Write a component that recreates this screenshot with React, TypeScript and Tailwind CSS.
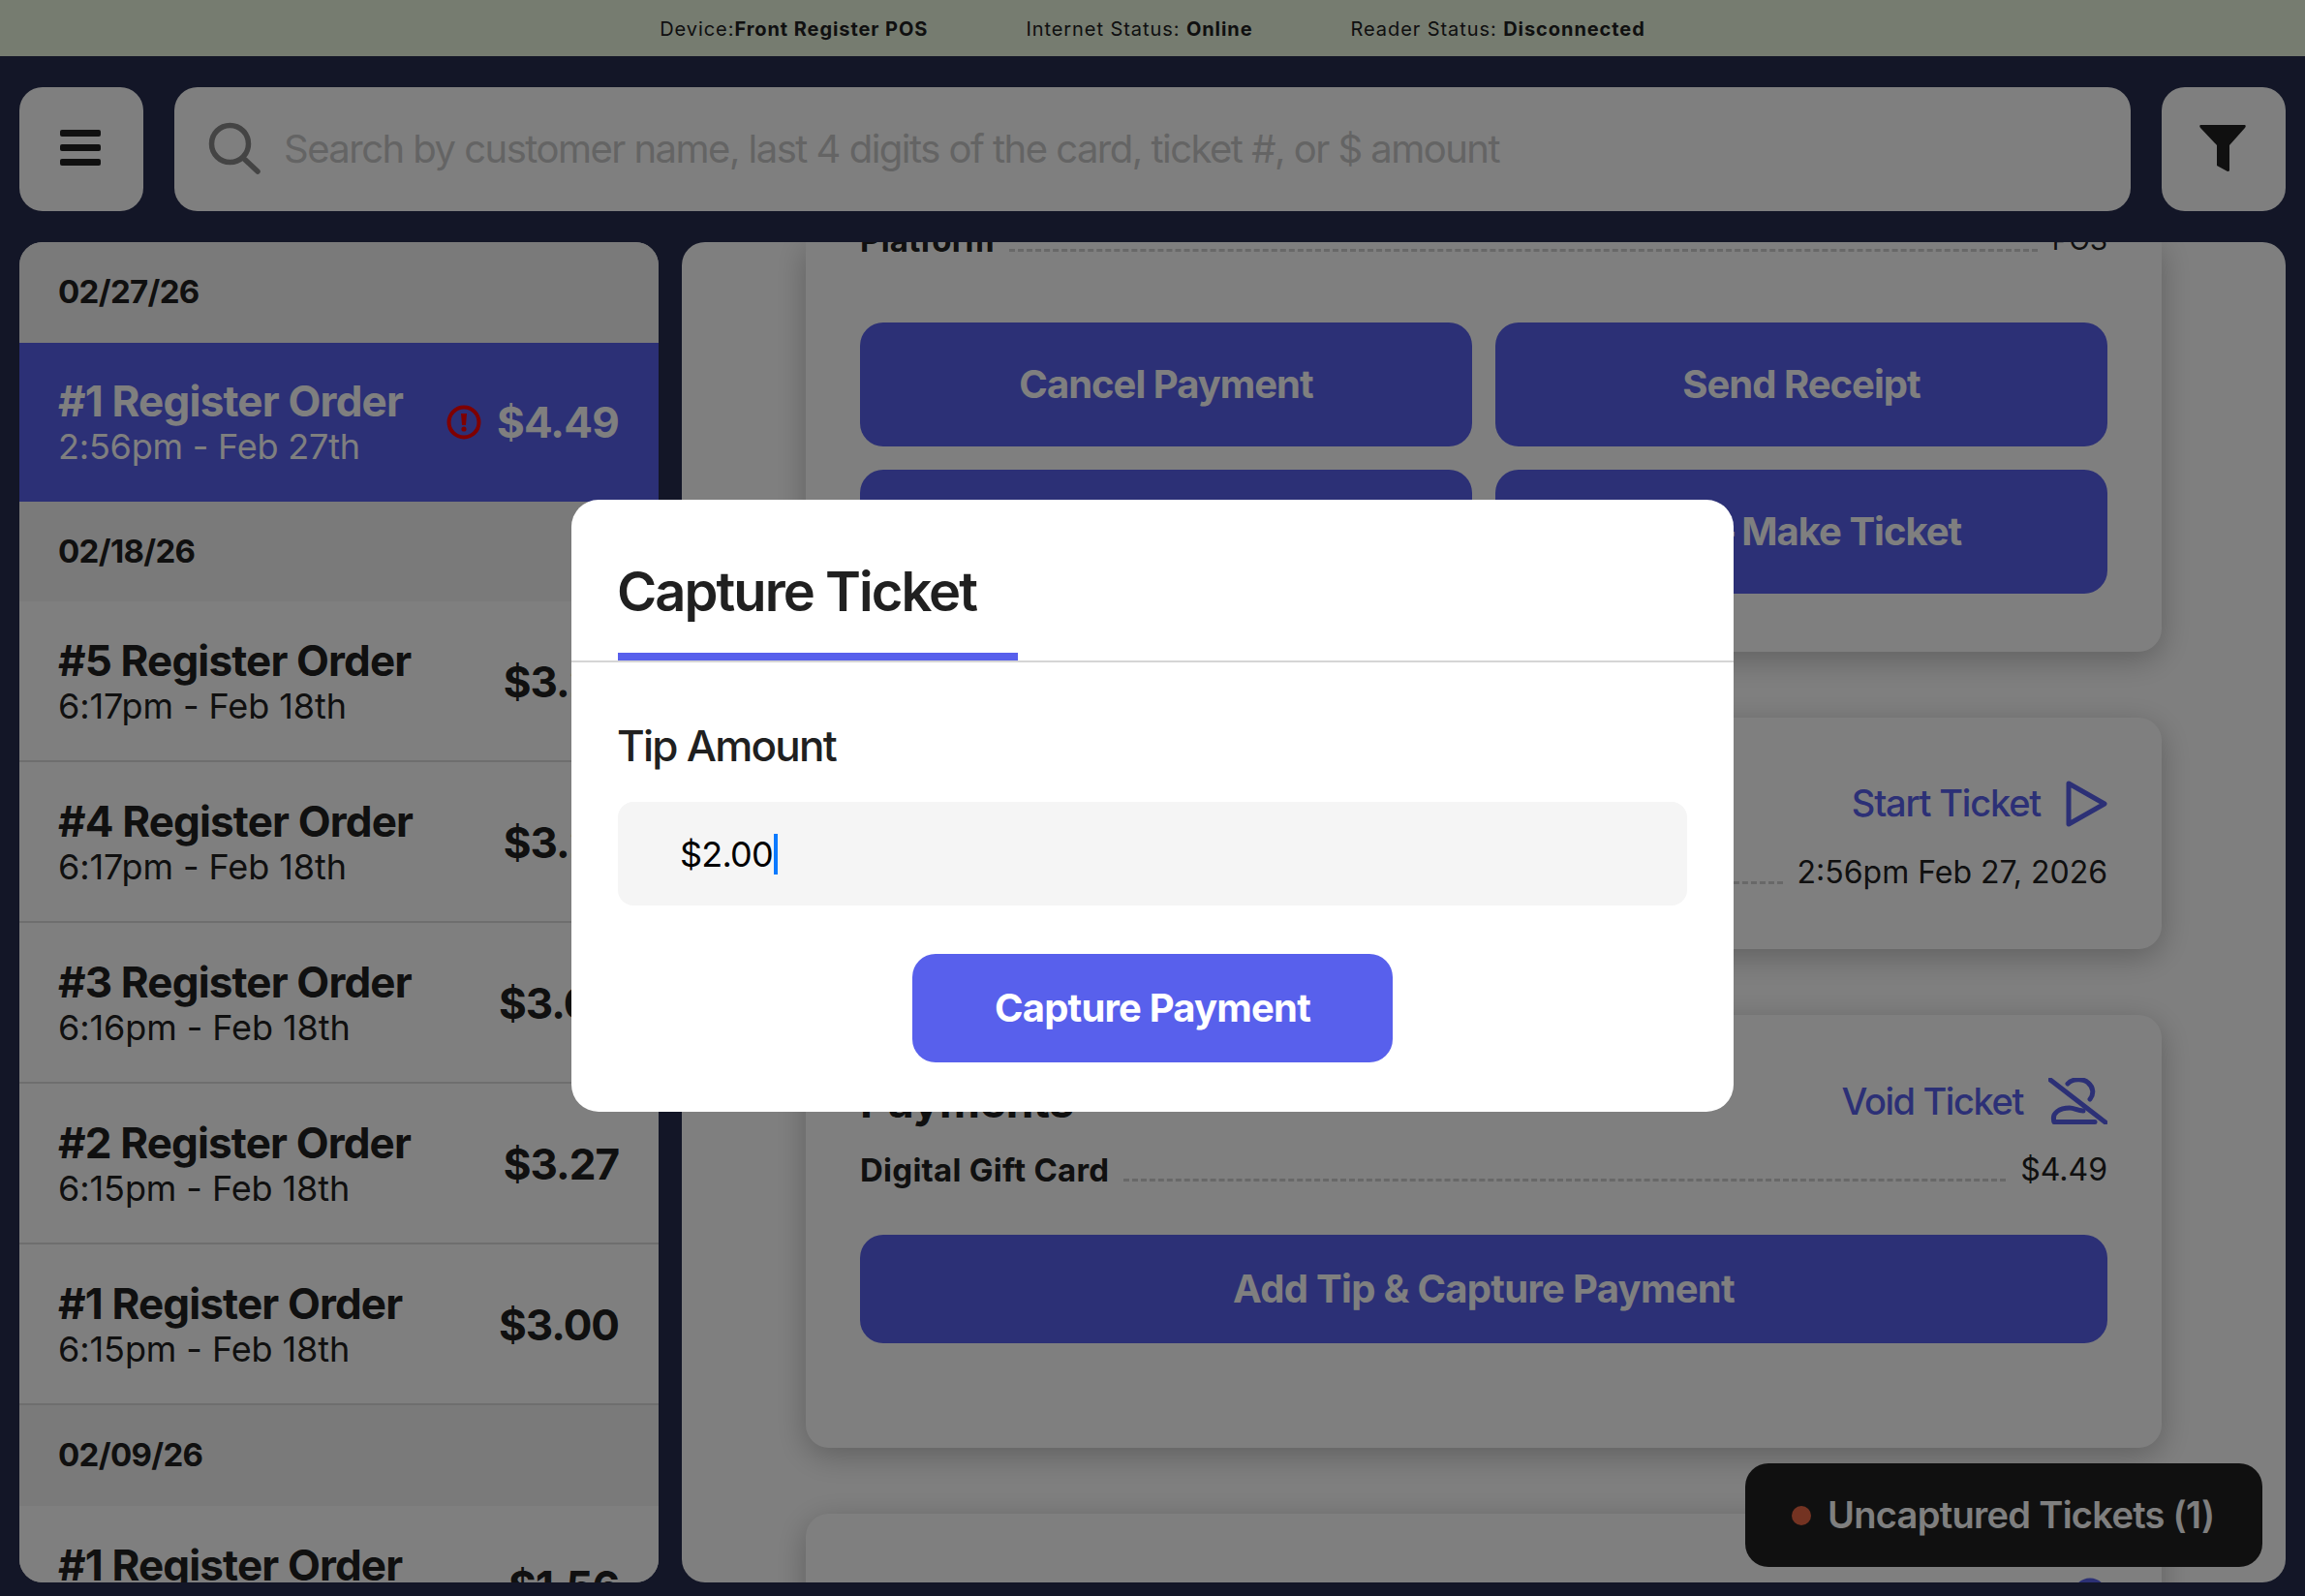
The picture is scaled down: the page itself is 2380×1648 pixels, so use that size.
import React from 'react';

const font = "font-['Inter','Noto_Sans',sans-serif]";

type Row = { title: string; time: string; amount: string };

function DateHeader({ label }: { label: string }) {
  return (
    <div className="flex h-[103.6px] items-center bg-[#f4f4f4] pr-[41px] pl-[40px] text-[33px] font-bold tracking-[-0.65px] text-[#202020]">
      {label}
    </div>
  );
}

function OrderRow({ title, time, amount }: Row) {
  return (
    <div className="flex h-[166px] items-center justify-between border-b-2 border-[#dcdcdc] bg-white pr-[41px] pl-[40px]">
      <div className="flex flex-col pt-[2px]">
        <span className="text-[44px] leading-[50px] font-bold tracking-[-0.85px] text-[#202020]">{title}</span>
        <span className="text-[36px] leading-[44px] tracking-[-0.08px] text-[#202020]">{time}</span>
      </div>
      <span className="pt-[2px] text-[44px] font-bold tracking-[-1px] text-[#202020]">{amount}</span>
    </div>
  );
}

function Leader({ label, value, bold, small }: { label: string; value: string; bold?: boolean; small?: boolean }) {
  return (
    <div className="flex items-end text-[32px] leading-[40px] text-[#202020]">
      <span className={bold ? 'text-[33px] font-bold tracking-[0.25px]' : ''}>{label}</span>
      <span className="mx-[15px] mb-[8px] h-0 flex-1 border-b-[3px] border-dashed border-[#d0d0d0]" />
      <span className={small ? 'text-[28px]' : ''}>{value}</span>
    </div>
  );
}

function ActionButton({ label }: { label: string }) {
  return (
    <button className="flex h-[128px] items-center justify-center rounded-[24px] bg-[#5860ec] text-[40px] font-bold tracking-[-1px] text-white">
      {label}
    </button>
  );
}

function PlayIcon() {
  return (
    <svg width="43" height="48" viewBox="0 0 43 48" fill="none" stroke="#5860ec" strokeWidth="5" strokeLinejoin="round">
      <path d="M3 3 L40 24 L3 45 Z" />
    </svg>
  );
}

function VoidIcon() {
  return (
    <svg width="61" height="48" viewBox="0 0 61 48" fill="none" stroke="#5860ec" strokeWidth="5" strokeLinecap="round">
      <path d="M2 2 L59 46" />
      <path d="M20 6 C24 1 36 0 41 5 C47 10 47 17 43 22" />
      <path d="M6 45 C3 36 12 31 22 31 C27 31 30 34 36 34" />
      <path d="M6 45.5 H48" />
    </svg>
  );
}

export default function App() {
  return (
    <div className={`relative flex h-[1648px] w-[2380px] flex-col overflow-hidden bg-[#262c4e] ${font}`}>
      {/* status strip */}
      <div className="flex h-[58px] shrink-0 items-center justify-center gap-[101px] bg-[#ecf8e0] pt-[2px] text-[20px] tracking-[0.93px] text-[#202020]">
        <span>
          Device:<b className="font-bold">Front Register POS</b>
        </span>
        <span>
          Internet Status: <b className="font-bold">Online</b>
        </span>
        <span>
          Reader Status: <b className="font-bold">Disconnected</b>
        </span>
      </div>

      {/* search row */}
      <div className="mt-[32px] flex h-[128px] shrink-0 gap-[32px] px-[20px]">
        <button className="flex w-[128px] shrink-0 flex-col items-center justify-center gap-[7.5px] rounded-[24px] bg-white pr-[2px] pb-[3px]">
          <span className="h-[7.5px] w-[42px] rounded-[2px] bg-[#202020]" />
          <span className="h-[7.5px] w-[42px] rounded-[2px] bg-[#202020]" />
          <span className="h-[7.5px] w-[42px] rounded-[2px] bg-[#202020]" />
        </button>
        <div className="flex flex-1 items-center gap-[23px] rounded-[24px] bg-white pl-[34px]">
          <svg width="56" height="56" viewBox="0 0 56 56" fill="none" stroke="#888888" strokeWidth="5.5" strokeLinecap="round">
            <circle cx="23.5" cy="22.5" r="19" />
            <path d="M37 37 L52 51" />
          </svg>
          <span className="text-[40px] tracking-[-1.52px] text-[#c8c8c8]">Search by customer name, last 4 digits of the card, ticket #, or $ amount</span>
        </div>
        <button className="flex w-[128px] shrink-0 items-center justify-center rounded-[24px] bg-white pr-[2px] pb-[2px]">
          <svg width="48" height="48" viewBox="0 0 48 48" fill="#202020">
            <path d="M1 0 H47 Q48.5 1 47 3 L31 21 V47 Q31 48 29 48 L18 42 V21 L1 3 Q-0.5 1 1 0 Z" />
          </svg>
        </button>
      </div>

      <div className="mt-[32px] flex h-[1384px] shrink-0 gap-[24px] px-[20px]">
        {/* ticket list */}
        <div className="w-[660px] shrink-0 overflow-hidden rounded-[24px] bg-white">
          <DateHeader label="02/27/26" />
          <div className="flex h-[164px] items-center justify-between bg-[#5860ec] pr-[41px] pl-[40px] text-white">
            <div className="flex flex-col pt-[1px]">
              <span className="text-[44px] leading-[50px] font-bold tracking-[-0.8px]">#1 Register Order</span>
              <span className="text-[36px] leading-[44px] tracking-[-0.2px]">2:56pm - Feb 27th</span>
            </div>
            <div className="flex items-center gap-[16px] pt-[1px]">
              <svg width="36" height="36" viewBox="0 0 36 36" fill="none" stroke="#ff0000" strokeWidth="4">
                <circle cx="18" cy="18" r="15.5" />
                <path d="M15 9 H21 L20 21 H16 Z" fill="#ff0000" stroke="none" />
                <circle cx="18" cy="25" r="2.6" fill="#ff0000" stroke="none" />
              </svg>
              <span className="text-[44px] font-bold tracking-[-0.8px]">$4.49</span>
            </div>
          </div>
          <DateHeader label="02/18/26" />
          <OrderRow title="#5 Register Order" time="6:17pm - Feb 18th" amount="$3.27" />
          <OrderRow title="#4 Register Order" time="6:17pm - Feb 18th" amount="$3.27" />
          <OrderRow title="#3 Register Order" time="6:16pm - Feb 18th" amount="$3.00" />
          <OrderRow title="#2 Register Order" time="6:15pm - Feb 18th" amount="$3.27" />
          <OrderRow title="#1 Register Order" time="6:15pm - Feb 18th" amount="$3.00" />
          <DateHeader label="02/09/26" />
          <OrderRow title="#1 Register Order" time="3:02pm - Feb 9th" amount="$1.56" />
        </div>

        {/* ticket detail */}
        <div className="flex-1 overflow-hidden rounded-[24px] bg-white px-[128px]">
          <div className="-mt-[1px] flex flex-col gap-[68px]">
            <div className="h-[424px] rounded-b-[24px] bg-white px-[56px] shadow-[0_8px_32px_rgba(0,0,0,0.25)]">
              <div className="-mt-[21px]">
                <Leader label="Platform" value="POS" bold small />
              </div>
              <div className="mt-[65px] grid grid-cols-2 gap-[24px]">
                <ActionButton label="Cancel Payment" />
                <ActionButton label="Send Receipt" />
                <ActionButton label="Print Receipt" />
                <ActionButton label="Re — Make Ticket" />
              </div>
            </div>

            <div className="h-[239px] rounded-[24px] bg-white px-[56px] pt-[60px] shadow-[0_8px_32px_rgba(0,0,0,0.25)]">
              <div className="flex items-center justify-end gap-[26px] text-[38px] font-medium tracking-[-1.2px] text-[#5860ec]">
                Start Ticket
                <PlayIcon />
              </div>
              <div className="mt-[23px]">
                <Leader label="Opened" value="2:56pm Feb 27, 2026" />
              </div>
            </div>

            <div className="h-[447px] rounded-[24px] bg-white px-[56px] pt-[64px] shadow-[0_8px_32px_rgba(0,0,0,0.25)]">
              <div className="flex h-[50px] items-center justify-between">
                <span className="text-[46px] leading-[50px] font-bold tracking-[-0.3px] text-[#202020]">Payments</span>
                <div className="flex items-center gap-[26px] text-[38px] font-medium tracking-[-1.4px] text-[#5860ec]">
                  Void Ticket
                  <VoidIcon />
                </div>
              </div>
              <div className="mt-[26px]">
                <Leader label="Digital Gift Card" value="$4.49" bold />
              </div>
              <button className="mt-[47px] flex h-[112px] w-full items-center justify-center rounded-[24px] bg-[#5860ec] text-[40px] font-bold tracking-[-0.7px] text-white">
                Add Tip &amp; Capture Payment
              </button>
            </div>

            <div className="flex h-[200px] justify-end rounded-[24px] bg-white px-[56px] pt-[66px] shadow-[0_8px_32px_rgba(0,0,0,0.25)]">
              <svg width="36" height="36" viewBox="0 0 36 36" fill="none" stroke="#5860ec" strokeWidth="5">
                <circle cx="18" cy="18" r="15" />
              </svg>
            </div>
          </div>
        </div>
      </div>

      {/* uncaptured toast */}
      <div className="absolute left-[1802px] top-[1511px] flex h-[107px] w-[534px] items-center gap-[17px] rounded-[24px] bg-[#202020] pl-[48px] text-[38px] font-semibold tracking-[-0.7px] text-white">
        <span className="h-[20px] w-[20px] rounded-full bg-[#e86644]" />
        Uncaptured Tickets (1)
      </div>

      {/* dim layer */}
      <div className="absolute inset-0 bg-black/50" />

      {/* capture dialog */}
      <div className="absolute left-[590px] top-[516px] h-[632px] w-[1200px] rounded-[28px] bg-white">
        <div className="relative h-[168px] border-b-2 border-[#d5d5d5]">
          <span className="absolute left-[47px] top-[61px] text-[56px] leading-[68px] font-semibold tracking-[-1.95px] text-[#202020]">Capture Ticket</span>
          <span className="absolute bottom-0 left-[48px] h-[8px] w-[413px] bg-[#5860ec]" />
        </div>
        <div className="flex flex-col px-[48px]">
          <span className="mt-[59px] -ml-[1px] text-[44px] leading-[54px] font-medium tracking-[-1.75px] text-[#202020]">Tip Amount</span>
          <div className="mt-[31px] flex h-[107px] items-center rounded-[16px] bg-[#f5f5f5] pl-[64px] text-[36px] tracking-[-0.8px] text-black">
            $2.00
            <span className="ml-[1px] h-[42px] w-[4px] bg-[#0a7aff]" />
          </div>
          <button className="mx-auto mt-[50px] h-[112px] w-[496px] rounded-[24px] bg-[#5860ec] text-[40px] font-bold tracking-[-0.8px] text-white">
            Capture Payment
          </button>
        </div>
      </div>
    </div>
  );
}
